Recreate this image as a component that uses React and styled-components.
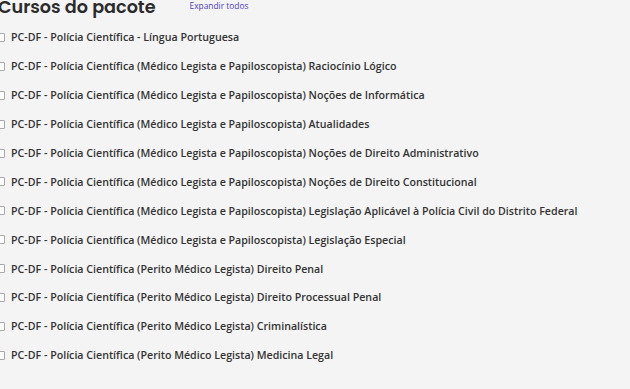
import React from "react";
import styled, { createGlobalStyle } from "styled-components";

const Global = createGlobalStyle`
  html, body { margin: 0; padding: 0; background: #f4f4f4; }
  body { font-family: "Open Sans", "Liberation Sans", sans-serif; }
`;

const Page = styled.div`
  width: 630px;
  height: 389px;
  overflow: hidden;
  background: #f4f4f4;
`;

const Inner = styled.div`
  margin-left: -4px;
  margin-top: -5px;
`;

const Header = styled.div`
  display: flex;
  align-items: baseline;
  gap: 34px;
  padding-left: 2px;
`;

const Title = styled.h2`
  margin: 0;
  font-family: "Poppins", "Inter", sans-serif;
  font-weight: 600;
  font-size: 17.6px;
  line-height: 24px;
  color: #2b2b2b;
`;

const Expand = styled.a`
  font-size: 8.4px;
  color: #4b3cc4;
  font-weight: 500;
  cursor: pointer;
  position: relative;
  top: -4px;
`;

const List = styled.ul`
  list-style: none;
  margin: 4px 0 0;
  padding: 0;
`;

const Row = styled.li`
  display: flex;
  align-items: center;
  gap: 6px;
  height: 28.9px;
`;

const Box = styled.span`
  width: 7px;
  height: 7px;
  border: 1px solid #a9a9a9;
  border-radius: 1px;
  background: #fff;
  flex: none;
`;

const Label = styled.span`
  font-size: 10.65px;
  font-weight: 600;
  color: #333;
  white-space: nowrap;
`;

const items = [
  "PC-DF - Polícia Científica - Língua Portuguesa",
  "PC-DF - Polícia Científica (Médico Legista e Papiloscopista) Raciocínio Lógico",
  "PC-DF - Polícia Científica (Médico Legista e Papiloscopista) Noções de Informática",
  "PC-DF - Polícia Científica (Médico Legista e Papiloscopista) Atualidades",
  "PC-DF - Polícia Científica (Médico Legista e Papiloscopista) Noções de Direito Administrativo",
  "PC-DF - Polícia Científica (Médico Legista e Papiloscopista) Noções de Direito Constitucional",
  "PC-DF - Polícia Científica (Médico Legista e Papiloscopista) Legislação Aplicável à Polícia Civil do Distrito Federal",
  "PC-DF - Polícia Científica (Médico Legista e Papiloscopista) Legislação Especial",
  "PC-DF - Polícia Científica (Perito Médico Legista) Direito Penal",
  "PC-DF - Polícia Científica (Perito Médico Legista) Direito Processual Penal",
  "PC-DF - Polícia Científica (Perito Médico Legista) Criminalística",
  "PC-DF - Polícia Científica (Perito Médico Legista) Medicina Legal",
];

export default function App() {
  return (
    <Page>
      <Global />
      <Inner>
        <Header>
          <Title>Cursos do pacote</Title>
          <Expand>Expandir todos</Expand>
        </Header>
        <List>
          {items.map((t) => (
            <Row key={t}>
              <Box />
              <Label>{t}</Label>
            </Row>
          ))}
        </List>
      </Inner>
    </Page>
  );
}
